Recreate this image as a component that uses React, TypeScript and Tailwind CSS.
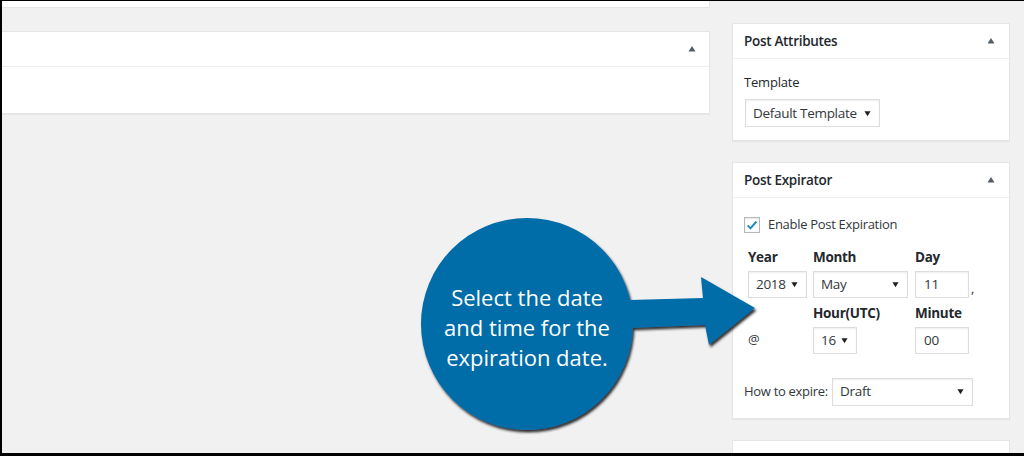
const ui = { fontFamily: '"Open Sans", "Noto Sans", sans-serif' };

const Caret = ({ className }: { className?: string }) => (
  <svg viewBox="0 0 8 8" className={className}>
    <path d="M0.5 6.5 L4 1 L7.5 6.5 Z" fill="currentColor" />
  </svg>
);

const Down = () => (
  <svg viewBox="0 0 8 8" className="w-[7px] h-[7px] text-[#222] shrink-0">
    <path d="M0.5 1.5 L4 7 L7.5 1.5 Z" fill="currentColor" />
  </svg>
);

const Select = ({ value, className }: { value: string; className: string }) => (
  <div
    className={
      "flex items-center justify-between whitespace-nowrap bg-white border border-[#ddd] shadow-[inset_0_1px_2px_rgba(0,0,0,0.07)] pl-[7px] pr-[8px] text-[13.5px] tracking-[-0.3px] text-[#32373c] " +
      className
    }
  >
    <span>{value}</span>
    <Down />
  </div>
);

const Input = ({ value }: { value: string }) => (
  <div className="w-[54px] h-[27px] flex items-center bg-white border border-[#ddd] shadow-[inset_0_1px_2px_rgba(0,0,0,0.07)] pl-[8px] text-[13.5px] tracking-[-0.3px] text-[#32373c]">
    {value}
  </div>
);

const PanelHeader = ({ title }: { title: string }) => (
  <div className="h-[35px] border-b border-[#eee] flex items-center justify-between pl-[11px] pr-[14px]">
    <h2 className="text-[13.5px] font-semibold tracking-[-0.3px] text-[#23282d]">{title}</h2>
    <Caret className="w-[8px] h-[8px] text-[#555d66]" />
  </div>
);

const Callout = () => (
  <div className="absolute left-[418px] top-[215px] w-[342px] h-[220px]">
    <svg viewBox="0 0 342 220" className="absolute inset-0 w-full h-full">
      <defs>
        <filter id="sh" x="-10%" y="-10%" width="120%" height="120%">
          <feDropShadow dx="1.5" dy="2.5" stdDeviation="0.9" floodColor="#1b1b1f" floodOpacity="0.9" />
        </filter>
      </defs>
      <g filter="url(#sh)" fill="#066ca8">
        <path d="M190 86 L212 85 L285 83 L283 62 L337 93 L291 130 L287 110 L212 113 L190 114 Z" />
        <circle cx="109" cy="109" r="106" />
      </g>
    </svg>
    <div
      className="absolute left-[3px] top-[3px] w-[212px] h-[212px] flex items-center justify-center pt-[6px] text-white text-[22px] leading-[30px] text-center"
      style={ui}
    >
      <p>
        Select the date
        <br />
        and time for the
        <br />
        expiration date.
      </p>
    </div>
  </div>
);

const label = "text-[13.5px] font-bold tracking-[-0.3px] leading-[20px] text-[#23282d]";

export default function App() {
  return (
    <div className="relative w-[1024px] h-[456px] bg-black pt-px pl-[2px] pb-[3px] overflow-hidden" style={ui}>
      <div className="h-full bg-[#f1f1f1] flex overflow-hidden">
        <div className="w-[708px] flex flex-col shrink-0">
          <div className="h-[7px] shrink-0 bg-white border-b border-r border-[#e5e5e5]" />
          <div className="mt-[23px] h-[83px] shrink-0 bg-white border-t border-r border-b border-[#e5e5e5] shadow-[0_1px_1px_rgba(0,0,0,0.04)]">
            <div className="h-[35px] border-b border-[#eee] flex items-center justify-end pr-[13px]">
              <Caret className="w-[8px] h-[8px] text-[#555d66]" />
            </div>
          </div>
        </div>

        <div className="ml-[22px] w-[278px] shrink-0 flex flex-col">
          <div className="mt-[22px] h-[118px] shrink-0 bg-white border border-[#e5e5e5] shadow-[0_1px_1px_rgba(0,0,0,0.04)]">
            <PanelHeader title="Post Attributes" />
            <div className="pl-[11px]">
              <p className="mt-[13px] text-[13px] tracking-[-0.2px] leading-[20px] text-[#23282d]">Template</p>
              <Select value="Default Template" className="mt-[7px] w-[135px] h-[28px] ml-px" />
            </div>
          </div>

          <div className="mt-[21px] h-[257px] shrink-0 bg-white border border-[#e5e5e5] shadow-[0_1px_1px_rgba(0,0,0,0.04)]">
            <PanelHeader title="Post Expirator" />
            <div className="pl-[11px] text-[#32373c]">
              <label className="mt-[17px] flex items-center gap-[8px] text-[13px] tracking-[-0.3px]">
                <span className="w-[16px] h-[16px] border border-[#b4b9be] bg-white shadow-[inset_0_1px_2px_rgba(0,0,0,0.1)] flex items-center justify-center">
                  <svg viewBox="0 0 16 16" className="w-[14px] h-[14px]">
                    <path d="M3 8.5 L6.3 11.8 L13 4" fill="none" stroke="#1e8cbe" strokeWidth="2.2" />
                  </svg>
                </span>
                Enable Post Expiration
              </label>

              <div className="ml-[4px] mt-[12px] grid grid-cols-[65px_102px_auto] items-center">
                <span className={label}>Year</span>
                <span className={label}>Month</span>
                <span className={label}>Day</span>
                <Select value="2018" className="mt-[4px] w-[59px] h-[27px]" />
                <Select value="May" className="mt-[4px] w-[95px] h-[27px]" />
                <div className="mt-[4px] flex items-end gap-[2px]">
                  <Input value="11" />
                  <span className="text-[13px] leading-[20px]">,</span>
                </div>
                <span className="mt-[5px]" />
                <span className={"mt-[5px] " + label}>Hour(UTC)</span>
                <span className={"mt-[5px] " + label}>Minute</span>
                <span className="mt-[4px] text-[13px]">@</span>
                <Select value="16" className="mt-[4px] w-[44px] h-[27px]" />
                <div className="mt-[4px]">
                  <Input value="00" />
                </div>
              </div>

              <div className="mt-[24px] flex items-center">
                <span className="text-[13px] tracking-[-0.3px] whitespace-nowrap w-[88px]">How to expire:</span>
                <Select value="Draft" className="w-[141px] h-[28px]" />
              </div>
            </div>
          </div>

          <div className="mt-[21px] h-[40px] shrink-0 bg-white border border-[#e5e5e5]" />
        </div>
      </div>
      <Callout />
    </div>
  );
}
